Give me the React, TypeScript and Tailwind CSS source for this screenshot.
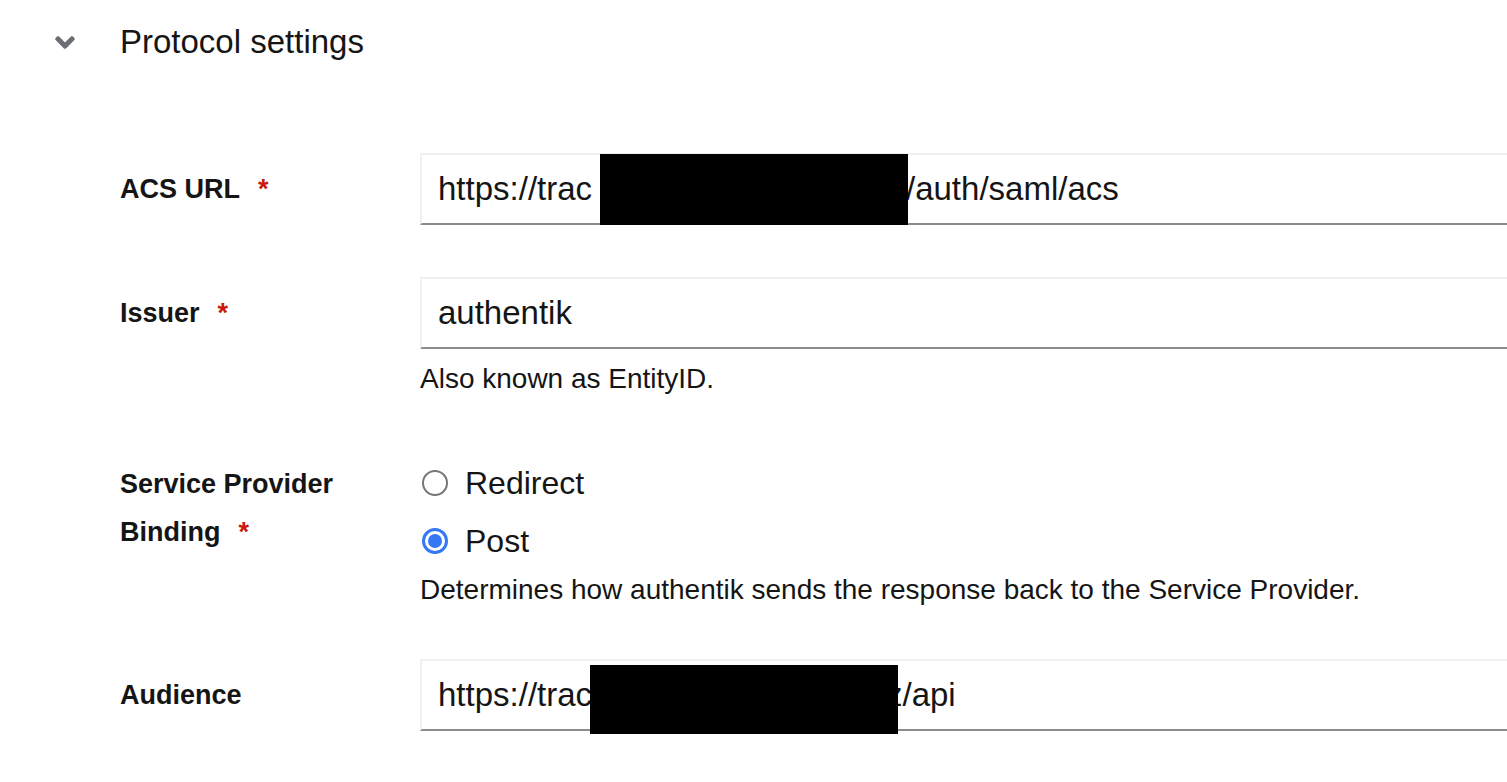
import React from "react";

function Label({ text, required }: { text: React.ReactNode; required?: boolean }) {
  return (
    <div className="w-[300px] shrink-0 whitespace-nowrap text-[27px] font-bold leading-[48px]">
      {text}
      {required && <span className="ml-[18px] text-[#c9190b] font-bold">*</span>}
    </div>
  );
}

function Input({ children }: { children: React.ReactNode }) {
  return (
    <div className="relative flex h-[72px] w-[1120px] shrink-0 items-center whitespace-nowrap border-t-2 border-l-2 border-b-2 border-t-[#f0f0f0] border-l-[#f0f0f0] border-b-[#8a8d90] bg-white pl-[16px] text-[33px]">
      {children}
    </div>
  );
}

function Radio({ label, checked }: { label: string; checked?: boolean }) {
  return (
    <div className="flex h-[40px] items-center">
      {checked ? (
        <div className="ml-[2px] flex h-[26px] w-[26px] items-center justify-center rounded-full border-[3px] border-[#3478f6] bg-white">
          <div className="h-[14px] w-[14px] rounded-full bg-[#3478f6]" />
        </div>
      ) : (
        <div className="ml-[2px] h-[26px] w-[26px] rounded-full border-2 border-[#767676] bg-white" />
      )}
      <span className="ml-[17px] text-[32px]">{label}</span>
    </div>
  );
}

export default function App() {
  return (
    <div className="h-[782px] w-[1507px] overflow-hidden bg-white text-[#151515] font-['Liberation_Sans',Arial,sans-serif]">
      <div className="mt-[22px] flex h-[40px] items-center pl-[55px]">
        <svg width="20" height="13" viewBox="0 150 320 212" fill="#6a6e73">
          <path d="M143 352.3L7 216.3c-9.4-9.4-9.4-24.6 0-33.9l22.6-22.6c9.4-9.4 24.6-9.4 33.9 0l96.4 96.4 96.4-96.4c9.4-9.4 24.6-9.4 33.9 0l22.6 22.6c9.4 9.4 9.4 24.6 0 33.9l-136 136c-9.4 9.4-24.6 9.4-33.8 0z" />
        </svg>
        <span className="ml-[45px] text-[33px]">Protocol settings</span>
      </div>

      <div className="mt-[91px] flex flex-col pl-[120px]">
        <div className="flex items-start">
          <div className="shrink-0 pt-[12px]">
            <Label text="ACS URL" required />
          </div>
          <Input>
            <span className="inline-block w-[468px] shrink-0">https://trac</span>
            <span>/auth/saml/acs</span>
            <div className="absolute left-[178px] top-[-1px] h-[71px] w-[308px] bg-black" />
          </Input>
        </div>

        <div className="mt-[52px] flex items-start">
          <div className="shrink-0 pt-[12px]">
            <Label text="Issuer" required />
          </div>
          <div className="flex shrink-0 flex-col">
            <Input>
              <span>authentik</span>
            </Input>
            <div className="mt-[14px] text-[28px] leading-[32px]">Also known as EntityID.</div>
          </div>
        </div>

        <div className="mt-[65px] flex items-start">
          <Label
            text={
              <>
                Service Provider
                <br />
                Binding
              </>
            }
            required
          />
          <div className="flex shrink-0 flex-col">
            <div className="mt-[3px]">
              <Radio label="Redirect" />
            </div>
            <div className="mt-[18px]">
              <Radio label="Post" checked />
            </div>
            <div className="mt-[13px] text-[28px] leading-[32px]">
              Determines how authentik sends the response back to the Service Provider.
            </div>
          </div>
        </div>

        <div className="mt-[53px] flex items-start">
          <div className="shrink-0 pt-[12px]">
            <Label text="Audience" />
          </div>
          <Input>
            <span className="inline-block w-[448px] shrink-0">https://trac</span>
            <span>z/api</span>
            <div className="absolute left-[168px] top-[4px] h-[69px] w-[308px] bg-black" />
          </Input>
        </div>
      </div>
    </div>
  );
}
